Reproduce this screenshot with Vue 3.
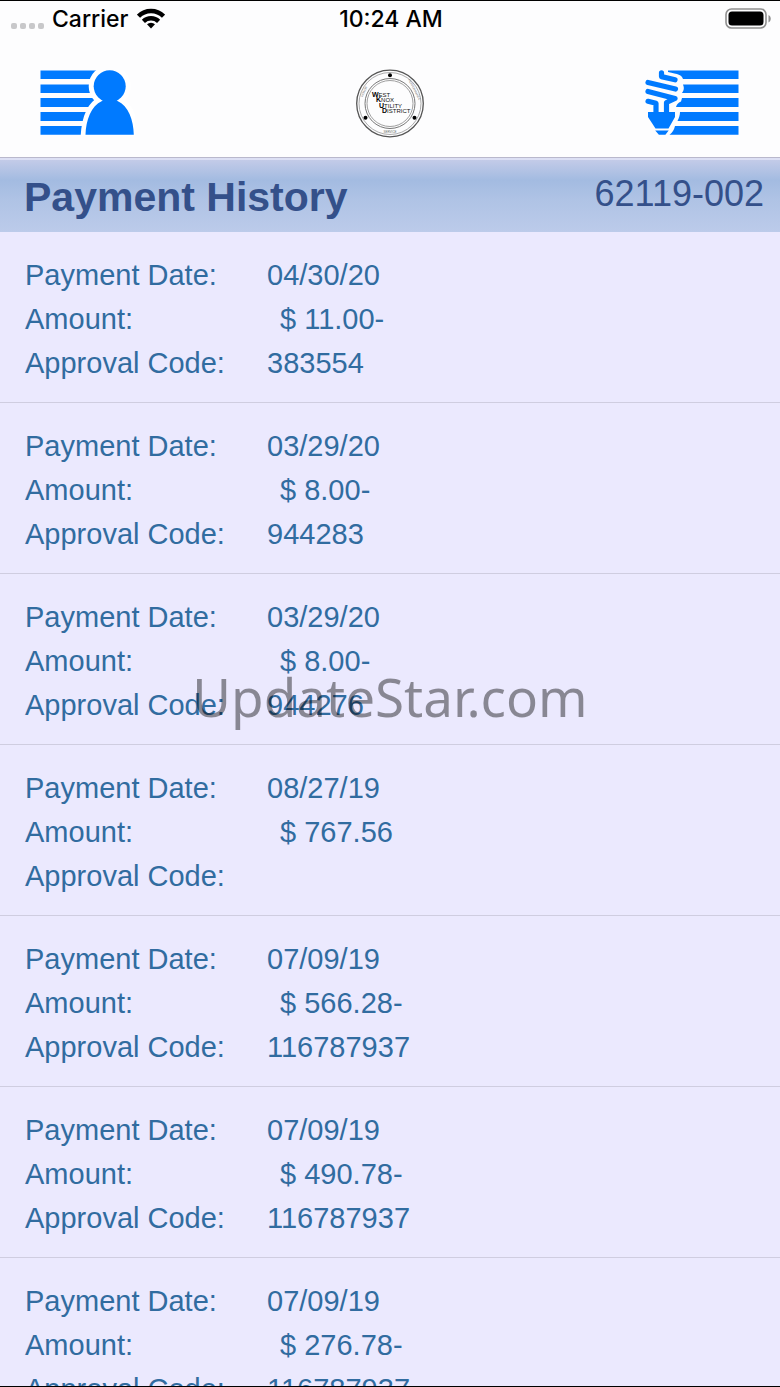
<template>
  <div class="screen">
    <!-- Status bar -->
    <div class="status-bar">
      <div class="status-left">
        <span class="signal"><i v-for="n in 4" :key="n" class="signal-dot"></i></span>
        <span>Carrier</span>
        <svg class="wifi" width="28" height="21" viewBox="0 0 28 21" fill="none" stroke="#000" stroke-width="4.4">
          <path d="M1.5 8.200a17.600 17.600 0 0 1 25 0" />
          <path d="M6.400 13.400a10.800 10.800 0 0 1 15.200 0" />
          <path d="M14 20.500l-4-4.200a5.800 5.800 0 0 1 8 0z" fill="#000" stroke="none" />
        </svg>
      </div>
      <time class="clock">10:24 AM</time>
      <div class="status-right">
        <svg width="46" height="22" viewBox="0 0 46 22">
          <rect x="1" y="1" width="40" height="19" rx="5.5" fill="none" stroke="#8f8f8f" stroke-width="1.6" />
          <rect x="3.500" y="3.500" width="35" height="14" rx="3.500" fill="#000" />
          <path d="M43.500 7v7.500c3-1.500 3-6 0-7.500z" fill="#8f8f8f" />
        </svg>
      </div>
    </div>

    <!-- Navigation -->
    <nav class="nav-bar">
      <button class="nav-btn" aria-label="Account">
        <svg width="95" height="66" viewBox="0 0 95 66" fill="#007aff">
          <path d="M.5 .5h64v8.500h-64zM.5 14.500h64v8.500h-64zM.5 28h64v9h-64zM.5 42h64v9h-64zM.5 56h64v8.800h-64z" />
          <g stroke="#fff" stroke-width="10" fill="#fff">
            <circle cx="69.700" cy="16.200" r="16" />
            <path d="M45.500 70C46 50 51 36 62 31h15.500c11 5 16 19 16.500 39z" />
          </g>
          <circle cx="69.700" cy="16.200" r="16" />
          <path d="M45.500 64.800C46 50 51 36 62 31l3-3h9l3.500 3c11 5 16 19 16.300 33.800z" />
        </svg>
      </button>

      <svg class="seal" width="68" height="69" viewBox="0 0 68 69" role="img" aria-label="West Knox Utility District">
        <g fill="none" stroke="#555">
          <circle cx="34" cy="34.500" r="33.300" stroke-width="1.300" />
          <circle cx="34" cy="34.500" r="31" stroke-width=".7" stroke="#888" />
          <circle cx="34" cy="34.500" r="25" stroke-width="1" stroke="#777" />
          <circle cx="34" cy="34.500" r="23" stroke-width=".8" stroke="#888" />
        </g>
        <g fill="#000">
          <circle cx="34" cy="6.200" r="2" />
          <circle cx="9.500" cy="48.700" r="2" />
          <circle cx="58.500" cy="48.700" r="2" />
        </g>
        <g class="seal-name">
          <text x="16" y="27.500"><tspan class="initial">W</tspan>EST</text>
          <text x="20" y="33"><tspan class="initial">K</tspan>NOX</text>
          <text x="23" y="38.500"><tspan class="initial">U</tspan>TILITY</text>
          <text x="26" y="44.300"><tspan class="initial">D</tspan>ISTRICT</text>
        </g>
        <g class="seal-motto">
          <text transform="translate(9 23) rotate(-65)">HONOR</text>
          <text transform="translate(57.500 21) rotate(62)">PERFORMANCE</text>
          <text x="34" y="63.500">SERVICE</text>
        </g>
      </svg>

      <button class="nav-btn" aria-label="Utilities">
        <svg width="95" height="66" viewBox="0 0 95 66" fill="#007aff">
          <path d="M23 .5h70.500v8.500H38C37 5 33 4 23 2zM38 14.500h55.500v8.500H37c2-3 2.500-5 1-8.500zM37 28h56.500v9H31c1-3 2-4 5-5.500zM35 42h58.500v9H32.500c1.500-3 2.500-6 2.500-9zM30 56h63.500v8.800H24.500c3-2.300 4.500-5 5.500-8.800z" />
          <g fill="none" stroke="#007aff" stroke-width="5.200" stroke-linecap="round" stroke-linejoin="round">
            <path d="M16.500 2.800v3.800L30 9.800" />
            <path d="M3 12.500l27.500 6.500" />
            <path d="M3 21.500l27 7-8.500 4V43" />
            <path d="M3 31.300l8 2V43" />
          </g>
          <path d="M3 42h27v5l-6.500 11.500h-13L3 47zM10.200 60.500h13.500l-3.300 4.300h-6.500z" />
        </svg>
      </button>
    </nav>

    <!-- Title -->
    <header class="title-bar">
      <h1 class="title">Payment History</h1>
      <span class="account">62119-002</span>
    </header>

    <!-- Payments -->
    <main class="payments">
      <dl v-for="(payment, i) in payments" :key="i" class="payment">
        <dt>Payment Date:</dt>
        <dd>{{ payment.date }}</dd>
        <dt>Amount:</dt>
        <dd class="amount">$ {{ payment.amount }}</dd>
        <dt>Approval Code:</dt>
        <dd>{{ payment.code }}</dd>
      </dl>
    </main>

    <div class="watermark">UpdateStar.com</div>
  </div>
</template>

<script setup>
const payments = [
  { date: '04/30/20', amount: '11.00-', code: '383554' },
  { date: '03/29/20', amount: '8.00-', code: '944283' },
  { date: '03/29/20', amount: '8.00-', code: '944276' },
  { date: '08/27/19', amount: '767.56', code: '' },
  { date: '07/09/19', amount: '566.28-', code: '116787937' },
  { date: '07/09/19', amount: '490.78-', code: '116787937' },
  { date: '07/09/19', amount: '276.78-', code: '116787937' },
];
</script>

<style>
body {
  background: #ebe9fe;
}
</style>

<style scoped>
.screen {
  position: relative;
  display: flex;
  flex-direction: column;
  box-sizing: border-box;
  height: 100vh;
  border-top: 1px solid #000;
  border-bottom: 1px solid #000;
  background: #ebe9fe;
  font-family: "Liberation Sans", Arial, sans-serif;
  overflow: hidden;
}

/* ── Status bar ── */
.status-bar {
  display: grid;
  grid-template-columns: 1fr auto 1fr;
  align-items: center;
  flex-shrink: 0;
  height: 36px;
  padding: 0 9px 0 11px;
  background: #fdfdfe;
  font-family: Inter, sans-serif;
  font-size: 23px;
  font-weight: 500;
  color: #000;
}
.status-left {
  display: flex;
  align-items: center;
  gap: 8px;
}
.signal {
  display: flex;
  gap: 3px;
  padding-top: 13px;
}
.signal-dot {
  width: 6px;
  height: 6px;
  border-radius: 2px;
  background: #c8c8ca;
}
.wifi {
  margin-bottom: 2px;
}
.status-right {
  display: flex;
  justify-content: flex-end;
}

/* ── Navigation ── */
.nav-bar {
  display: flex;
  align-items: flex-start;
  justify-content: space-between;
  flex-shrink: 0;
  padding: 32px 40px 19px;
  background: #fdfdfe;
  border-bottom: 1px solid #b9b8cc;
}
.nav-btn {
  display: flex;
  padding: 1px 0 0;
  border: none;
  background: transparent;
  cursor: pointer;
}
.seal-name {
  font-size: 6px;
  fill: #111;
}
.initial {
  font-size: 7px;
  font-weight: 700;
  fill: #000;
}
.seal-motto {
  font-size: 3px;
  fill: #666;
  text-anchor: middle;
}

/* ── Title ── */
.title-bar {
  display: flex;
  justify-content: space-between;
  flex-shrink: 0;
  padding: 2px 16px 0 24px;
  border-top: 2px solid #dcdff4;
  background: linear-gradient(#c3cbe8, #a3bbe1 28%, #afc3e5 55%, #bccbea);
  color: #34508a;
}
.title {
  margin: 0;
  font-size: 41px;
  font-weight: 700;
  line-height: 70px;
}
.account {
  font-size: 36px;
  line-height: 64px;
}

/* ── Payments ── */
.payments {
  flex: 1;
  min-height: 0;
  overflow-y: auto;
  scrollbar-width: none;
}
.payment {
  display: grid;
  grid-template-columns: 242px 1fr;
  grid-auto-rows: 44px;
  margin: 0;
  padding: 21px 24px 17px 25px;
  border-bottom: 1px solid #cfcde0;
  font-size: 29px;
  line-height: 44px;
  color: #316ca0;
}
.payment dd {
  margin: 0;
}
.payment .amount {
  padding-left: 13px;
}

/* ── Watermark ── */
.watermark {
  position: absolute;
  top: 50%;
  left: 50%;
  transform: translate(-50%, -50%);
  padding-top: 6px;
  font-family: "Noto Sans", sans-serif;
  font-size: 53px;
  line-height: 72px;
  color: rgba(0, 0, 0, 0.42);
  pointer-events: none;
}
</style>
